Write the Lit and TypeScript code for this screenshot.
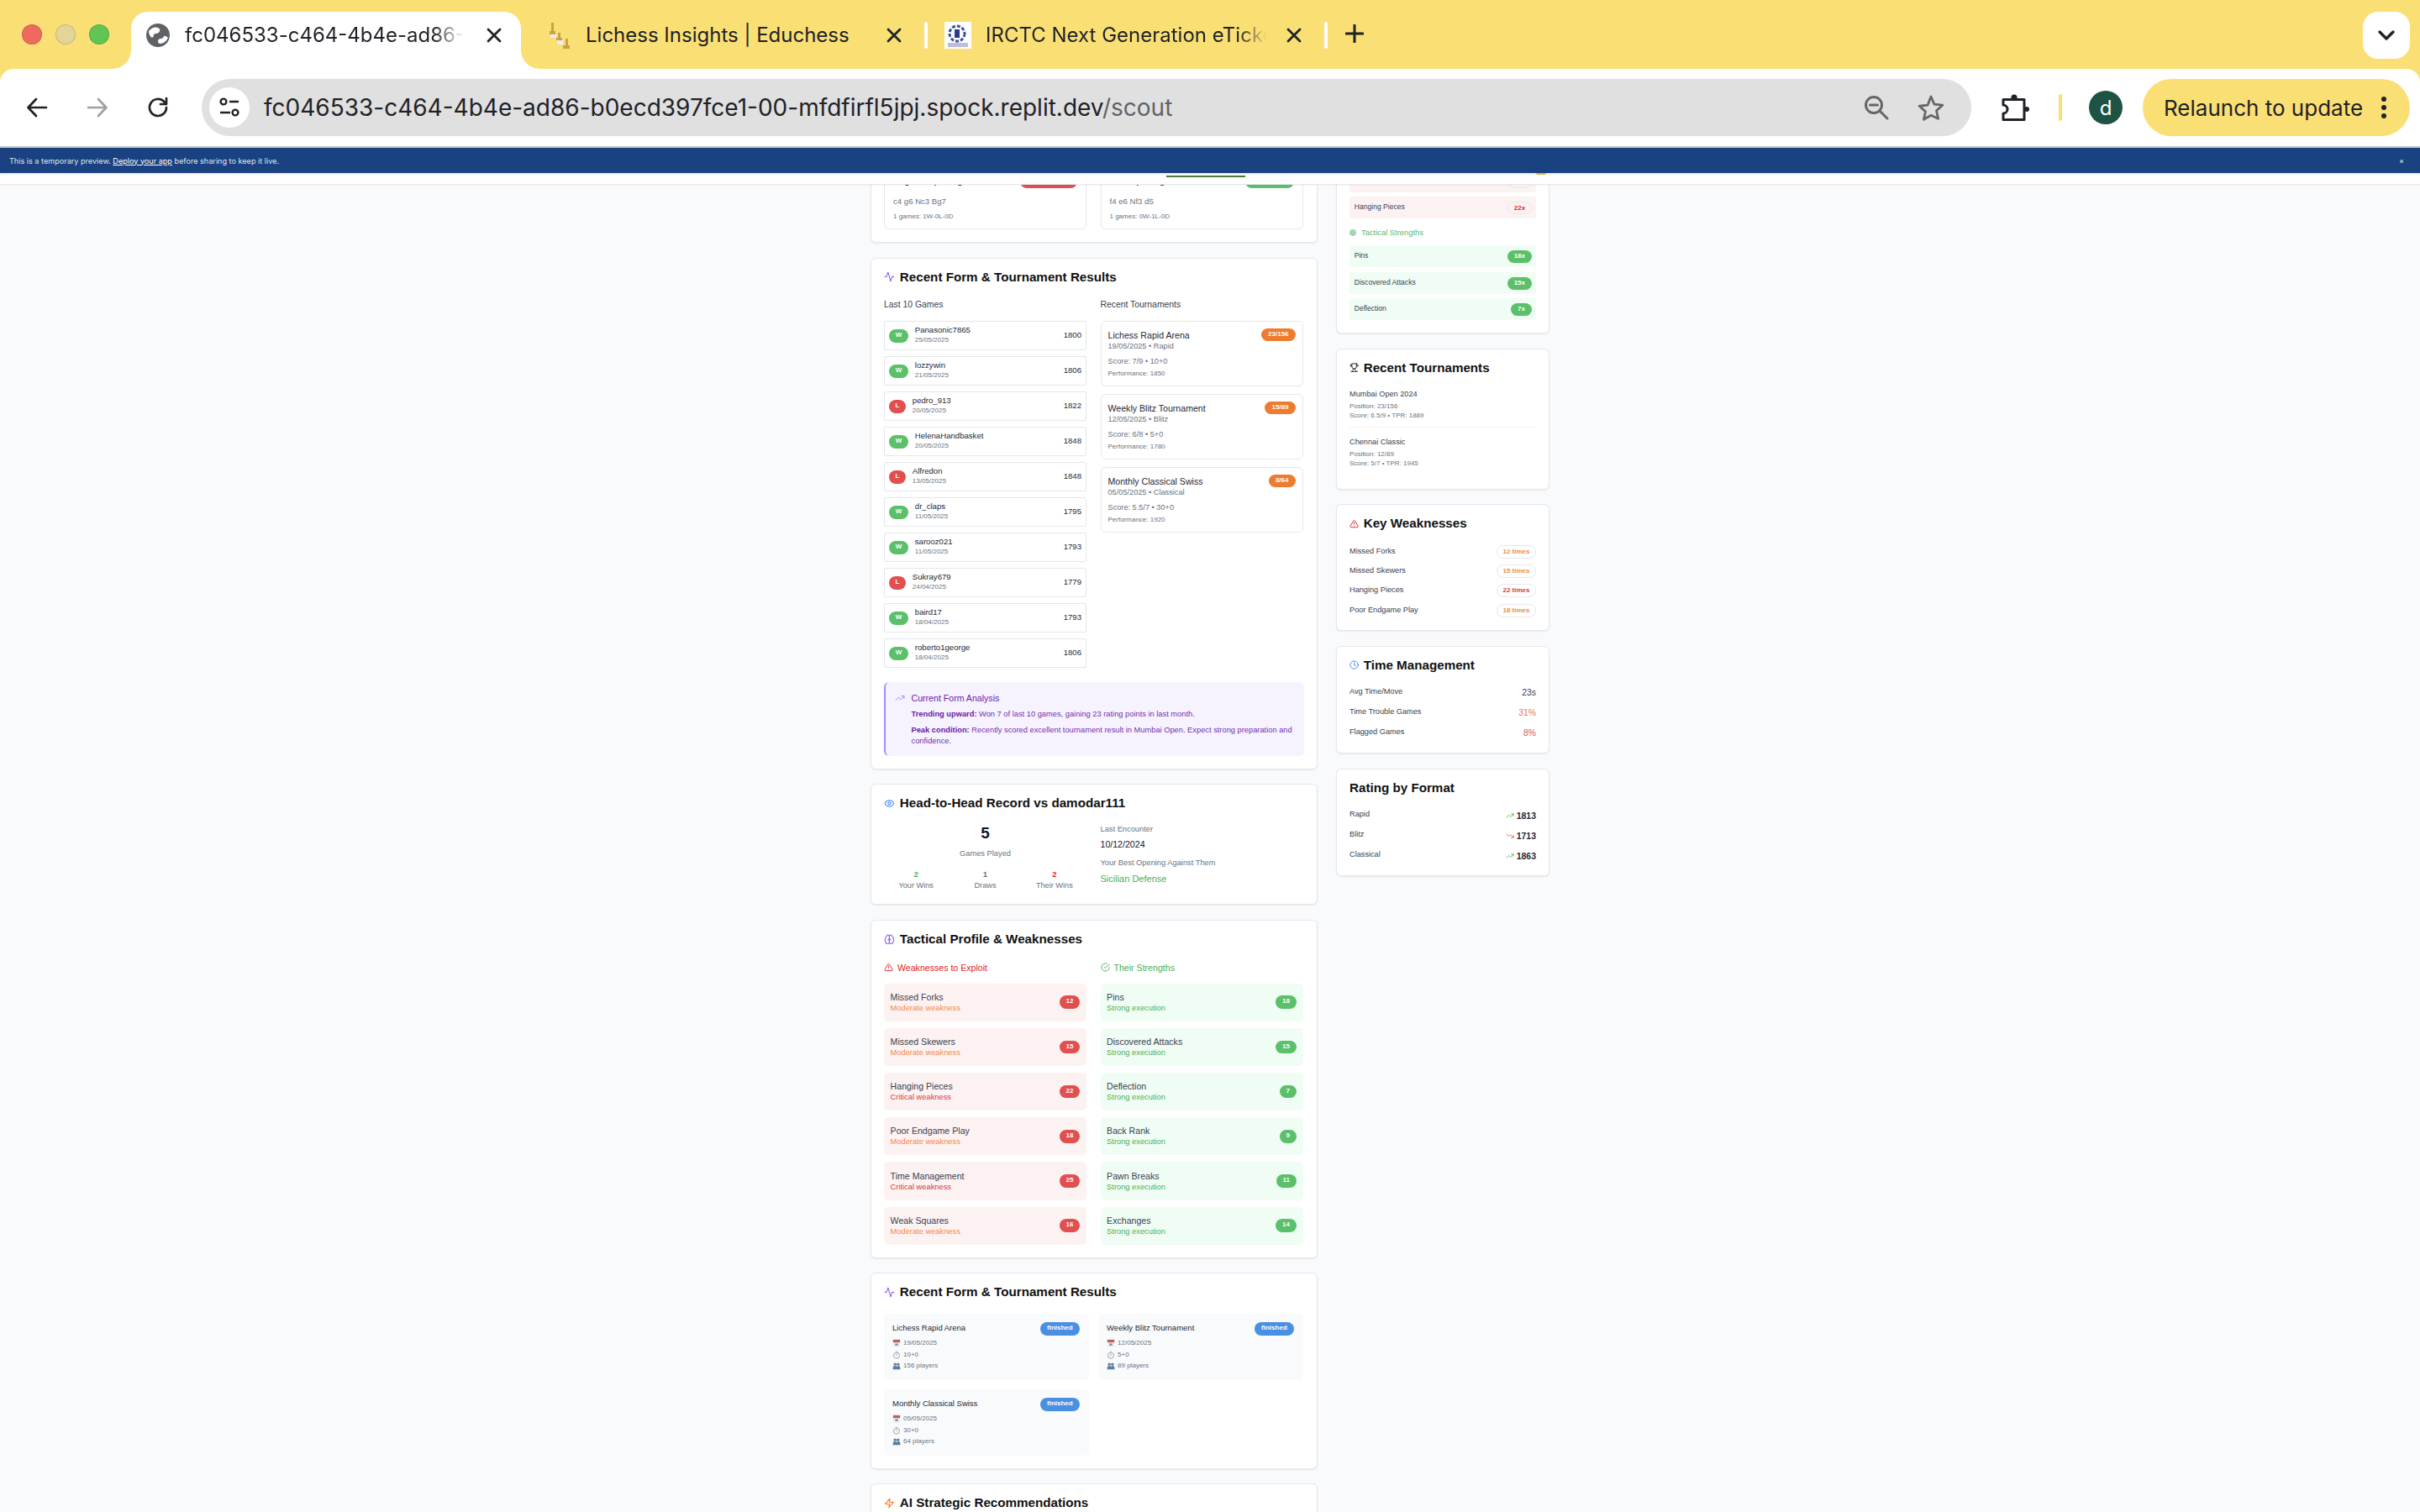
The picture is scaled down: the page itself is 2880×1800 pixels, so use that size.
import {css, html, LitElement, svg} from 'lit';
import {customElement} from 'lit/decorators.js';

const icon = (name: string, cls = '') => {
  const parts: Record<string, unknown> = {
    activity: svg`<path d="M22 12h-2.48a2 2 0 0 0-1.93 1.46l-2.35 8.36a.25.25 0 0 1-.48 0L9.24 2.18a.25.25 0 0 0-.48 0l-2.35 8.36A2 2 0 0 1 4.49 12H2"/>`,
    up: svg`<polyline points="22 7 13.5 15.5 8.5 10.5 2 17"/><polyline points="16 7 22 7 22 13"/>`,
    down: svg`<polyline points="22 17 13.5 8.5 8.5 13.5 2 7"/><polyline points="16 17 22 17 22 11"/>`,
    eye: svg`<path d="M2 12s3-7 10-7 10 7 10 7-3 7-10 7-10-7-10-7Z"/><circle cx="12" cy="12" r="3"/>`,
    brain: svg`<path d="M12 5a3 3 0 1 0-5.997.125 4 4 0 0 0-2.526 5.77 4 4 0 0 0 .556 6.588A4 4 0 1 0 12 18Z"/><path d="M12 5a3 3 0 1 1 5.997.125 4 4 0 0 1 2.526 5.77 4 4 0 0 1-.556 6.588A4 4 0 1 1 12 18Z"/><path d="M15 13a4.5 4.5 0 0 1-3-4 4.5 4.5 0 0 1-3 4"/>`,
    alert: svg`<path d="m21.73 18-8-14a2 2 0 0 0-3.48 0l-8 14A2 2 0 0 0 4 21h16a2 2 0 0 0 1.73-3"/><path d="M12 9v4"/><path d="M12 17h.01"/>`,
    check: svg`<path d="M22 11.08V12a10 10 0 1 1-5.93-9.14"/><polyline points="22 4 12 14.01 9 11.01"/>`,
    trophy: svg`<path d="M6 9H4.5a2.5 2.5 0 0 1 0-5H6"/><path d="M18 9h1.5a2.5 2.5 0 0 0 0-5H18"/><path d="M4 22h16"/><path d="M10 14.66V17c0 .55-.47.98-.97 1.21C7.85 18.75 7 20.24 7 22"/><path d="M14 14.66V17c0 .55.47.98.97 1.21C16.15 18.75 17 20.24 17 22"/><path d="M18 2H6v7a6 6 0 0 0 12 0V2Z"/>`,
    clock: svg`<circle cx="12" cy="12" r="10"/><polyline points="12 6 12 12 16 14"/>`,
    zap: svg`<polygon points="13 2 3 14 12 14 11 22 21 10 12 10 13 2"/>`,
  };
  return html`<svg class="ic ${cls}" viewBox="0 0 24 24" fill="none" stroke="currentColor" stroke-width="2" stroke-linecap="round" stroke-linejoin="round">${parts[name]}</svg>`;
};

const emoji = {
  cal: html`<svg class="em" viewBox="0 0 12 12"><rect x="1" y="1" width="10" height="10.5" fill="#eceef0"/><rect x="1" y="1" width="10" height="4" fill="#b5645f"/><rect x="4" y="6.5" width="4" height="3" fill="#8b8f96"/></svg>`,
  clock: html`<svg class="em" viewBox="0 0 12 12"><circle cx="6" cy="6.8" r="4.3" fill="#f3f4f5" stroke="#9a9ea3"/><rect x="5" y=".8" width="2" height="1.2" fill="#9a9ea3"/><path d="M6 4.5v2.4" stroke="#777" stroke-width=".7"/></svg>`,
  people: html`<svg class="em" viewBox="0 0 12 12"><g fill="#5d7d9c"><circle cx="3.8" cy="3.8" r="2"/><circle cx="8.2" cy="3.8" r="2"/><path d="M.8 11V8q0-2 3-2t3 2v3zM6.6 11V7.4q0-1.4 1.6-1.4q3 0 3 2v3z"/></g></svg>`,
};

const games = [
  ['W', 'Panasonic7865', '25/05/2025', '1800'],
  ['W', 'lozzywin', '21/05/2025', '1806'],
  ['L', 'pedro_913', '20/05/2025', '1822'],
  ['W', 'HelenaHandbasket', '20/05/2025', '1848'],
  ['L', 'Alfredon', '13/05/2025', '1848'],
  ['W', 'dr_claps', '11/05/2025', '1795'],
  ['W', 'sarooz021', '11/05/2025', '1793'],
  ['L', 'Sukray679', '24/04/2025', '1779'],
  ['W', 'baird17', '18/04/2025', '1793'],
  ['W', 'roberto1george', '18/04/2025', '1806'],
];
const results = [
  ['Lichess Rapid Arena', '23/156', '19/05/2025 • Rapid', 'Score: 7/9 • 10+0', 'Performance: 1850'],
  ['Weekly Blitz Tournament', '15/89', '12/05/2025 • Blitz', 'Score: 6/8 • 5+0', 'Performance: 1780'],
  ['Monthly Classical Swiss', '8/64', '05/05/2025 • Classical', 'Score: 5.5/7 • 30+0', 'Performance: 1920'],
];
const weak = [
  ['Missed Forks', 'Moderate weakness', '12', 'mod'],
  ['Missed Skewers', 'Moderate weakness', '15', 'mod'],
  ['Hanging Pieces', 'Critical weakness', '22', 'crit'],
  ['Poor Endgame Play', 'Moderate weakness', '18', 'mod'],
  ['Time Management', 'Critical weakness', '25', 'crit'],
  ['Weak Squares', 'Moderate weakness', '16', 'mod'],
];
const strong = [
  ['Pins', '18'], ['Discovered Attacks', '15'], ['Deflection', '7'],
  ['Back Rank', '9'], ['Pawn Breaks', '11'], ['Exchanges', '14'],
];
const events = [
  ['Lichess Rapid Arena', '19/05/2025', '10+0', '156 players'],
  ['Weekly Blitz Tournament', '12/05/2025', '5+0', '89 players'],
  ['Monthly Classical Swiss', '05/05/2025', '30+0', '64 players'],
];
const keyWeak = [
  ['Missed Forks', '12 times', 'mod'], ['Missed Skewers', '15 times', 'mod'],
  ['Hanging Pieces', '22 times', 'crit'], ['Poor Endgame Play', '18 times', 'mod'],
];

@customElement('app-root')
export class AppRoot extends LitElement {
  static styles = css`
    :host {
      display: flex;
      flex-direction: column;
      width: 2880px;
      height: 1800px;
      overflow: hidden;
      background: #f8fafc;
      font-family: 'Liberation Sans', Arial, sans-serif;
      color: #1f2937;
    }
    /* browser chrome */
    .tabs {
      height: 82px;
      flex: none;
      display: flex;
      background: #fadf75;
      font-family: Inter, sans-serif;
      font-size: 24px;
      color: #1f2227;
    }
    .lights { display: flex; gap: 16px; padding: 29px 0 0 26px; width: 130px; box-sizing: border-box; }
    .lights i { width: 24px; height: 24px; border-radius: 50%; box-sizing: border-box; border: 1px solid rgba(0,0,0,.14); }
    .tab {
      position: relative;
      margin-top: 14px;
      width: 464px;
      margin-left: 26px;
      height: 68px;
      background: #fff;
      border-radius: 20px 20px 0 0;
      display: flex;
      align-items: flex-start;
      padding: 14px 0 0 18px;
      box-sizing: border-box;
    }
    .tab::before, .tab::after {
      content: '';
      position: absolute;
      bottom: 0;
      width: 22px;
      height: 22px;
    }
    .tab::before { left: -22px; background: radial-gradient(circle at 0 0, #fadf75 21.5px, #fff 22px); }
    .tab::after { right: -22px; background: radial-gradient(circle at 100% 0, #fadf75 21.5px, #fff 22px); }
    .tab .globe { width: 28px; height: 28px; flex: none; }
    .tab .t { margin-left: 18px; width: 332px; flex: none; white-space: nowrap; line-height: 28px;
      -webkit-mask-image: linear-gradient(to right, #000 295px, transparent 332px); }
    .x { width: 18px; height: 18px; flex: none; }
    .tab .x { margin: 5px 0 0 27px; }
    .bgtab { display: flex; align-items: flex-start; padding-top: 26px; flex: none; }
    .bgtab .fav { width: 32px; height: 32px; flex: none; }
    .bgtab .t { white-space: nowrap; line-height: 30px; margin-top: 1px; }
    .bgtab .x { margin-top: 7px; }
    .sep { width: 4px; height: 32px; margin-top: 26px; background: #fff; border-radius: 2px; flex: none; }
    .plus { width: 22px; height: 22px; margin: 29px 0 0 21px; flex: none; }
    .chev {
      margin: 14px 12px 0 auto;
      width: 56px;
      height: 56px;
      background: #fff;
      border-radius: 18px;
      display: flex;
      align-items: center;
      justify-content: center;
    }
    .chev svg { width: 22px; height: 14px; }
    .toolbar {
      height: 92px;
      flex: none;
      box-sizing: border-box;
      display: flex;
      align-items: center;
      background: #fff;
      border-radius: 16px 16px 0 0;
      font-family: Inter, sans-serif;
      color: #1f2227;
    }
    .toolwrap { background: #fadf75; flex: none; }
    .nav { width: 26px; height: 26px; flex: none; }
    .omni {
      margin-left: 39px;
      width: 2106px;
      height: 68px;
      border-radius: 34px;
      background: #e0e0e0;
      display: flex;
      align-items: center;
      box-sizing: border-box;
      padding: 0 0 0 9px;
      flex: none;
    }
    .tune { width: 48px; height: 48px; border-radius: 50%; background: #fff; display: flex; align-items: center; justify-content: center; flex: none; }
    .tune svg { width: 26px; height: 26px; }
    .url { margin-left: 17px; font-size: 28px; width: 1904px; white-space: nowrap; flex: none; }
    .url span { color: #5f6368; }
    .omni .zoom { width: 30px; height: 30px; flex: none; }
    .omni .star { width: 32px; height: 32px; margin-left: 34px; flex: none; }
    .puzzle { width: 34px; height: 34px; margin-left: 35px; flex: none; }
    .vsep { width: 4px; height: 32px; background: #fadf75; border-radius: 2px; margin-left: 35px; flex: none; }
    .avatar { width: 40px; height: 40px; margin-left: 32px; border-radius: 50%; background: #1e5245; color: #fff; font-size: 24px; display: flex; align-items: center; justify-content: center; flex: none; }
    .relaunch { margin-left: 24px; width: 318px; height: 68px; border-radius: 34px; background: #fadf75; font-size: 26px; display: flex; align-items: center; padding-left: 25px; box-sizing: border-box; white-space: nowrap; flex: none; }
    .relaunch svg { width: 6px; height: 28px; margin-left: 22px; flex: none; }
    .line { height: 2px; background: #c7c7c7; flex: none; }
    .preview {
      height: 30px;
      flex: none;
      background: #1a4180;
      color: #dfe6f2;
      font-family: Inter, sans-serif;
      font-size: 9.1px;
      display: flex;
      align-items: center;
      justify-content: space-between;
      padding: 0 19px 0 11px;
    }
    .preview u { color: #fff; }
    /* page */
    .page { flex: 1; position: relative; overflow: hidden; min-height: 0; }
    .topnav {
      position: absolute;
      z-index: 2;
      left: 0;
      right: 0;
      top: 0;
      height: 13px;
      background: #fff;
      border-bottom: 1px solid #e5e7eb;
      box-shadow: inset 0 3px 3px -2px rgba(0,0,0,.12), 0 1px 2px rgba(0,0,0,.04);
    }
    .topnav .act { position: absolute; left: 1388px; width: 94px; top: 3px; height: 2px; background: #4b7a3c; }
    .topnav .dot { position: absolute; left: 1828px; width: 12px; height: 2px; top: 0; border-radius: 0 0 6px 6px; background: #d9b93b; }
    .grid {
      display: grid;
      grid-template-columns: 532px 254px;
      column-gap: 22px;
      justify-content: center;
      align-items: start;
      margin-top: -19px;
    }
    .col { display: flex; flex-direction: column; gap: 17.5px; }
    .card {
      background: #fff;
      border: 1px solid #e5e7eb;
      border-radius: 6px;
      box-shadow: 0 1px 2px rgba(0,0,0,.07);
      padding: 15px;
    }
    h2 {
      margin: -2px 0 0;
      font-size: 15.2px;
      line-height: 18px;
      font-weight: 700;
      color: #111;
      display: flex;
      align-items: center;
      gap: 6px;
      white-space: nowrap;
    }
    .ic { width: 12.8px; height: 12.8px; flex: none; }
    .side h2 { gap: 5.5px; }
    .side h2 .ic { width: 11.2px; height: 11.2px; }
    .purple { color: #8b5cf6; }
    .blue { color: #3b82f6; }
    .amber { color: #f97316; }
    .dark { color: #222; }
    .two { display: grid; grid-template-columns: 241px 241px; column-gap: 16.5px; }
    /* opening cut off by the top nav */
    .openings { margin-bottom: .5px; }
    .op {
      border: 1px solid #e5e7eb;
      border-radius: 6px;
      padding: 6px 10px 0;
      height: 69.5px;
      box-sizing: border-box;
      position: relative;
    }
    .op .n { font-size: 10.4px; font-weight: 700; line-height: 12px; color: #374151; }
    .op .pill { position: absolute; right: 10px; top: 4px; height: 16px; border-radius: 8px; }
    .op .m { font-size: 9.6px; color: #6b7280; line-height: 12px; margin-top: 12px; }
    .op .g { font-size: 8px; color: #6b7280; line-height: 10px; margin-top: 7px; }
    /* form */
    .sub { font-size: 10.4px; line-height: 12px; color: #374151; margin: 18.3px 0 13.3px; }
    .subs { align-items: start; }
    .stack { display: flex; flex-direction: column; }
    .game {
      height: 35.4px;
      box-sizing: border-box;
      border: 1px solid #e5e7eb;
      border-radius: 2px;
      margin-bottom: 6.6px;
      display: flex;
      align-items: center;
      padding: 0 5px;
    }
    .res { height: 16px; border-radius: 8px; color: #fff; font-size: 8px; font-weight: 700; line-height: 14px; text-align: center; flex: none; }
    .res.W { width: 23px; background: #5cbf69; }
    .res.L { width: 20px; background: #e14f4f; }
    .game .who { margin: -2.3px 0 0 7.8px; flex: 1; }
    .game .name { font-size: 9.6px; line-height: 12px; color: #1f2937; }
    .game .date { font-size: 8px; line-height: 10px; color: #6b7280; margin-top: .3px; }
    .game .rate { font-size: 9.6px; color: #1f2937; margin-top: -2.6px; }
    .trn {
      position: relative;
      border: 1px solid #e5e7eb;
      border-radius: 6px;
      padding: 9.5px 8px 0;
      height: 78.4px;
      box-sizing: border-box;
      margin-bottom: 8.6px;
    }
    .trn .name { font-size: 10.6px; line-height: 13px; color: #1f2937; }
    .trn .meta { font-size: 9.2px; line-height: 11px; color: #6b7280; margin-top: 1.4px; }
    .trn .score { font-size: 9.2px; line-height: 11px; color: #6b7280; margin-top: 7px; }
    .trn .perf { font-size: 8px; line-height: 10px; color: #6b7280; margin-top: 4px; }
    .trn .rank {
      position: absolute;
      right: 8px;
      top: 7.7px;
      height: 15px;
      padding: 0 8px;
      border-radius: 8px;
      background: #ee7b30;
      color: #fff;
      font-size: 8px;
      font-weight: 700;
      line-height: 13px;
    }
    .form {
      height: 88px;
      box-sizing: border-box;
      margin-top: 9.7px;
      background: #f6f3fe;
      border-left: 2px solid #a78bfa;
      border-radius: 6px;
      padding: 13px 8px 0 10.5px;
      color: #7431b0;
      font-size: 9.3px;
    }
    .form b { color: #6b21a8; }
    .form .hd { display: flex; align-items: center; gap: 8px; font-size: 10.6px; line-height: 12px; color: #6b21a8; }
    .form .hd .ic { color: #a78bfa; width: 12px; height: 12px; }
    .form p { margin: 7.5px 0 0 20px; line-height: 13px; }
    .form p + p { margin-top: 6px; }
    /* h2h */
    .h2h { margin-top: 16.3px; padding-bottom: 1px; }
    .h2h .left { text-align: center; padding-top: 1px; }
    .big { font-size: 19px; font-weight: 700; line-height: 20px; color: #111827; }
    .gp { font-size: 9.3px; line-height: 12px; color: #6b7280; margin-top: 8px; }
    .wins { display: grid; grid-template-columns: repeat(3, 1fr); margin: 12.5px -3px 0; }
    .wins b { display: block; font-size: 9.6px; line-height: 11px; }
    .wins span { display: block; font-size: 9.2px; line-height: 12px; color: #6b7280; margin-top: 2.5px; }
    .green { color: #4caf50; }
    .red { color: #dc2626; }
    .gray { color: #6b7280; }
    .h2h .lab { font-size: 9.3px; line-height: 12px; color: #6b7280; }
    .h2h .val { font-size: 10.6px; line-height: 13px; color: #111827; margin: 5.8px 0 9.2px; }
    .h2h .op2 { font-size: 11px; line-height: 14px; color: #4caf50; margin-top: 5.3px; }
    /* tactical */
    .tact-head { display: flex; align-items: center; gap: 5px; font-size: 10.6px; line-height: 12px; margin: 18.7px 0 13px; }
    .tact-head .ic { width: 11px; height: 11px; }
    .trow {
      height: 45.3px;
      box-sizing: border-box;
      border-radius: 5px;
      margin-bottom: 7.9px;
      padding: 0 8px 0 7.6px;
      display: flex;
      align-items: center;
      justify-content: space-between;
    }
    .trow.bad { background: #fdf2f2; }
    .trow.good { background: #f0fdf4; }
    .trow .name { font-size: 10.6px; line-height: 13px; color: #374151; }
    .trow .desc { font-size: 9.3px; line-height: 11px; margin-top: 1px; }
    .mod { color: #f08a4b; }
    .crit { color: #d9393e; }
    .num {
      height: 15.6px;
      padding: 0 7.6px;
      border-radius: 8px;
      color: #fff;
      font-size: 8px;
      font-weight: 700;
      line-height: 13px;
      text-align: center;
    }
    .bad .num { background: #e14f4f; }
    .good .num { background: #5cbf69; }
    .last { margin-bottom: 0; }
    /* events */
    .events { display: grid; grid-template-columns: 243.7px 243.7px; column-gap: 11.4px; row-gap: 11.3px; margin-top: 16.6px; padding-bottom: .2px; }
    .ev { position: relative; height: 78.7px; box-sizing: border-box; background: #f8fafc; border-radius: 6px; padding: 10.2px 10px 0; }
    .ev .name { font-size: 9.5px; line-height: 13px; color: #1f2937; }
    .ev .pill { position: absolute; right: 11px; top: 10px; height: 16px; padding: 0 8px; border-radius: 8px; background: #4a90e2; color: #fff; font-size: 8px; font-weight: 700; line-height: 14px; }
    .ev .li { display: flex; align-items: center; gap: 3px; font-size: 8px; line-height: 10px; color: #6b7280; margin-top: 3.6px; }
    .ev .name + .li { margin-top: 6.8px; }
    .em { width: 10px; height: 10px; flex: none; }
    .ai { height: 120px; box-sizing: border-box; }
    /* sidebar */
    .srow { height: 26px; box-sizing: border-box; border-radius: 3px; margin-bottom: 5px; display: flex; align-items: center; justify-content: space-between; padding: 0 5px 0 5.7px; font-size: 8.6px; color: #374151; }
    .srow.last { margin-bottom: 0; }
    .srow.bad { background: #fdf2f2; }
    .srow.good { background: #f0fdf4; }
    .srow span:first-child { margin-top: -2px; }
    .srow .tag { height: 15px; padding: 0 8px; border-radius: 8px; font-size: 8px; font-weight: 700; line-height: 13px; text-align: center; }
    .srow.bad .tag { border: 1px solid #e5e7eb; box-sizing: border-box; color: #dc2626; background: #fdf2f2; width: 29px; padding: 0; }
    .srow.good .tag { background: #5cbf69; color: #fff; }
    .shead { display: flex; align-items: center; gap: 6px; font-size: 9.4px; line-height: 12px; color: #5cb870; margin: 11px 0 9px; }
    .shead i { width: 8px; height: 8px; border-radius: 50%; background: #a5d6ae; flex: none; }
    .st .name { font-size: 9.2px; line-height: 12px; color: #374151; margin-top: 16px; }
    .st hr + .name { margin-top: 11.4px; }
    .st .l { font-size: 8px; line-height: 11px; color: #6b7280; }
    .st .name + .l { margin-top: 3px; }
    .st hr { border: 0; border-top: 1px solid #f1f2f4; margin: 8.5px 0 0; }
    .st .l:last-child { margin-bottom: 24.5px; }
    .st { padding-bottom: 0; }
    .kw { display: flex; flex-direction: column; gap: 7.3px; margin-top: 16.4px; padding-bottom: .6px; }
    .kw div { display: flex; align-items: center; justify-content: space-between; font-size: 9.2px; color: #374151; }
    .kw span { margin-top: -2px; }
    .kw b { width: 47px; height: 16px; box-sizing: border-box; border: 1px solid #e5e7eb; border-radius: 8px; background: #fff; font-size: 8px; line-height: 13px; text-align: center; font-weight: 700; }
    .list { display: flex; flex-direction: column; gap: 12px; margin-top: 16px; padding-bottom: 4.3px; }
    .list div { height: 12px; display: flex; justify-content: space-between; align-items: flex-start; font-size: 9.2px; line-height: 12px; color: #374151; }
    .list em { font-style: normal; font-size: 10.4px; line-height: 12px; margin-top: 2.3px; display: flex; align-items: center; gap: 3px; }
    .list em.strong { font-weight: 700; color: #1f2937; font-size: 10.5px; }
    .list em span { display: flex; }
    .list .ic { width: 10px; height: 10px; }
    .orange { color: #e8764e; }
    .redish { color: #e0565a; }
  `;

  render() {
    return html`
      <div class="tabs">
        <div class="lights">
          <i style="background:#ee6a5f"></i><i style="background:#e3d597"></i><i style="background:#61c554"></i>
        </div>
        <div class="tab">
          <svg class="globe" viewBox="0 0 28 28"><circle cx="14" cy="14" r="14" fill="#5f6368"/><path d="M3 9q5-6 11-4q3 1 2 4t-5 3q-3 1-2 3l-2 2q-4-3-4-8zM26 17q-3 6-9 7q-3 0-3-3t4-3q3-1 3-3q2-1 5 2z" fill="#fff"/></svg>
          <div class="t">fc046533-c464-4b4e-ad86-</div>
          ${this.x()}
        </div>
        <div class="bgtab" style="margin-left:33px;width:447px">
          <svg class="fav" style="width:28px" viewBox="0 0 28 32"><path d="M2 14h7v5H2zM10 21h7v6h-7z" fill="#eee"/><g fill="#c9a24b"><rect x="3" y="1" width="3" height="11"/><rect x="1" y="11" width="7" height="4"/><rect x="11" y="13" width="3" height="7"/><rect x="9" y="19" width="7" height="3"/><rect x="20" y="20" width="3" height="8"/><rect x="17" y="28" width="8" height="4"/></g></svg>
          <div class="t" style="margin-left:16px;width:358px">Lichess Insights | Educhess</div>
          ${this.x()}
        </div>
        <div class="sep"></div>
        <div class="bgtab" style="margin-left:20px;width:425px">
          <svg class="fav" viewBox="0 0 32 32"><rect width="32" height="32" fill="#fff"/><circle cx="15" cy="14" r="9" fill="none" stroke="#3d4f9e" stroke-width="3" stroke-dasharray="4 2"/><rect x="12" y="9" width="6" height="10" fill="#2d3a8c"/><rect x="4" y="25" width="24" height="5" fill="#b9bfdc"/></svg>
          <div class="t" style="margin-left:17px;width:334px;-webkit-mask-image:linear-gradient(to right,#000 300px,transparent 334px)">IRCTC Next Generation eTicke</div>
          ${this.x('margin-left:24px')}
        </div>
        <div class="sep" style="margin-left:27px"></div>
        <svg class="plus" viewBox="0 0 22 22"><path d="M11 1v20M1 11h20" stroke="#1f2227" stroke-width="3" stroke-linecap="round"/></svg>
        <div class="chev"><svg viewBox="0 0 22 14"><path d="M3 3l8 8 8-8" fill="none" stroke="#1f2227" stroke-width="3.4" stroke-linecap="round" stroke-linejoin="round"/></svg></div>
      </div>
      <div class="toolwrap">
        <div class="toolbar">
          <svg class="nav" style="margin-left:31px" viewBox="0 0 26 26"><path d="M24 13H3M12 3L2.5 13 12 23" fill="none" stroke="#1f2227" stroke-width="2.7" stroke-linecap="round" stroke-linejoin="round"/></svg>
          <svg class="nav" style="margin-left:46px" viewBox="0 0 26 26"><path d="M2 13h21M14 3l9.5 10L14 23" fill="none" stroke="#a1a1a1" stroke-width="2.7" stroke-linecap="round" stroke-linejoin="round"/></svg>
          <svg class="nav" style="margin-left:46px" viewBox="0 0 26 26"><path d="M23 13a10 10 0 1 1-3-7.2L23 9M23 2v7h-7" fill="none" stroke="#1f2227" stroke-width="2.7" stroke-linecap="round" stroke-linejoin="round"/></svg>
          <div class="omni">
            <div class="tune"><svg viewBox="0 0 26 26" fill="none" stroke="#1f2227" stroke-width="2.4"><circle cx="6" cy="6" r="3.4"/><path d="M13 6h11M2 19h12"/><circle cx="20" cy="19" r="3.4"/></svg></div>
            <div class="url">fc046533-c464-4b4e-ad86-b0ecd397fce1-00-mfdfirfl5jpj.spock.replit.dev<span>/scout</span></div>
            <svg class="zoom" viewBox="0 0 30 30" fill="none" stroke="#666" stroke-width="3" stroke-linecap="round"><circle cx="12" cy="12" r="9.5"/><path d="M7.5 12h9M19 19l9 9"/></svg>
            <svg class="star" viewBox="0 0 32 32"><path d="M16 3l4 9.2 9.8 1-7.3 6.5 2.1 9.6L16 25.3l-8.6 5 2.1-9.6-7.3-6.5 9.8-1z" fill="none" stroke="#666" stroke-width="2.8" stroke-linejoin="round"/></svg>
          </div>
          <svg class="puzzle" viewBox="0 0 34 34"><circle cx="16" cy="5" r="3.6" fill="#1f2227"/><circle cx="31" cy="19" r="3" fill="#1f2227"/><path d="M3 7.5H28V31.5H3V24a5 5 0 0 0 0-10z" fill="#fff" stroke="#1f2227" stroke-width="3" stroke-linejoin="round"/></svg>
          <div class="vsep"></div>
          <div class="avatar">d</div>
          <div class="relaunch">Relaunch to update
            <svg viewBox="0 0 6 28"><circle cx="3" cy="4" r="3" fill="#1f2227"/><circle cx="3" cy="14" r="3" fill="#1f2227"/><circle cx="3" cy="24" r="3" fill="#1f2227"/></svg>
          </div>
        </div>
      </div>
      <div class="line"></div>
      <div class="preview">
        <span>This is a temporary preview. <u>Deploy your app</u> before sharing to keep it live.</span>
        <span>×</span>
      </div>
      <div class="page">
        <div class="topnav"><div class="act"></div><div class="dot"></div></div>
        <div class="grid">
          <div class="col main">${this.mainCol()}</div>
          <div class="col side">${this.sideCol()}</div>
        </div>
      </div>
    `;
  }

  x(style = '') {
    return html`<svg class="x" style=${style} viewBox="0 0 18 18"><path d="M2 2l14 14M16 2L2 16" stroke="#1f2227" stroke-width="2.8" stroke-linecap="round"/></svg>`;
  }

  mainCol() {
    return html`
      <section class="card">
        <div class="two openings">
          <div class="op"><div class="n">English Opening</div><div class="pill" style="background:#e14f4f;width:68px"></div><div class="m">c4 g6 Nc3 Bg7</div><div class="g">1 games: 1W-0L-0D</div></div>
          <div class="op"><div class="n">Bird Opening</div><div class="pill" style="background:#5cbf69;width:58px"></div><div class="m">f4 e6 Nf3 d5</div><div class="g">1 games: 0W-1L-0D</div></div>
        </div>
      </section>
      <section class="card">
        <h2>${icon('activity', 'purple')}Recent Form &amp; Tournament Results</h2>
        <div class="two subs">
          <div class="stack">
            <div class="sub">Last 10 Games</div>
            ${games.map(g => html`<div class="game">
              <div class="res ${g[0]}">${g[0]}</div>
              <div class="who"><div class="name">${g[1]}</div><div class="date">${g[2]}</div></div>
              <div class="rate">${g[3]}</div>
            </div>`)}
          </div>
          <div class="stack">
            <div class="sub">Recent Tournaments</div>
            ${results.map(r => html`<div class="trn">
              <div class="rank">${r[1]}</div>
              <div class="name">${r[0]}</div>
              <div class="meta">${r[2]}</div>
              <div class="score">${r[3]}</div>
              <div class="perf">${r[4]}</div>
            </div>`)}
          </div>
        </div>
        <div class="form">
          <div class="hd">${icon('up')}Current Form Analysis</div>
          <p><b>Trending upward:</b> Won 7 of last 10 games, gaining 23 rating points in last month.</p>
          <p><b>Peak condition:</b> Recently scored excellent tournament result in Mumbai Open. Expect strong preparation and confidence.</p>
        </div>
      </section>
      <section class="card">
        <h2>${icon('eye', 'blue')}Head-to-Head Record vs damodar111</h2>
        <div class="two h2h">
          <div class="left">
            <div class="big">5</div>
            <div class="gp">Games Played</div>
            <div class="wins">
              <div><b class="green">2</b><span>Your Wins</span></div>
              <div><b class="gray">1</b><span>Draws</span></div>
              <div><b class="red">2</b><span>Their Wins</span></div>
            </div>
          </div>
          <div>
            <div class="lab">Last Encounter</div>
            <div class="val">10/12/2024</div>
            <div class="lab">Your Best Opening Against Them</div>
            <div class="op2">Sicilian Defense</div>
          </div>
        </div>
      </section>
      <section class="card">
        <h2>${icon('brain', 'purple')}Tactical Profile &amp; Weaknesses</h2>
        <div class="two">
          <div>
            <div class="tact-head red">${icon('alert')}Weaknesses to Exploit</div>
            ${weak.map((w, i) => html`<div class="trow bad ${i === 5 ? 'last' : ''}">
              <div><div class="name">${w[0]}</div><div class="desc ${w[3]}">${w[1]}</div></div>
              <div class="num">${w[2]}</div>
            </div>`)}
          </div>
          <div>
            <div class="tact-head green">${icon('check')}Their Strengths</div>
            ${strong.map((s, i) => html`<div class="trow good ${i === 5 ? 'last' : ''}">
              <div><div class="name">${s[0]}</div><div class="desc green">Strong execution</div></div>
              <div class="num">${s[1]}</div>
            </div>`)}
          </div>
        </div>
      </section>
      <section class="card">
        <h2>${icon('activity', 'purple')}Recent Form &amp; Tournament Results</h2>
        <div class="events">
          ${events.map(e => html`<div class="ev">
            <div class="pill">finished</div>
            <div class="name">${e[0]}</div>
            <div class="li">${emoji.cal}${e[1]}</div>
            <div class="li">${emoji.clock}${e[2]}</div>
            <div class="li">${emoji.people}${e[3]}</div>
          </div>`)}
        </div>
      </section>
      <section class="card ai">
        <h2>${icon('zap', 'amber')}AI Strategic Recommendations</h2>
      </section>
    `;
  }

  sideCol() {
    return html`
      <section class="card">
        <div class="srow bad"><span>Missed Skewers</span><span class="tag">15x</span></div>
        <div class="srow bad"><span>Hanging Pieces</span><span class="tag">22x</span></div>
        <div class="shead"><i></i>Tactical Strengths</div>
        <div class="srow good" style="margin-bottom:6px"><span>Pins</span><span class="tag">18x</span></div>
        <div class="srow good"><span>Discovered Attacks</span><span class="tag">15x</span></div>
        <div class="srow good last"><span>Deflection</span><span class="tag">7x</span></div>
      </section>
      <section class="card st">
        <h2>${icon('trophy', 'dark')}Recent Tournaments</h2>
        <div class="name">Mumbai Open 2024</div>
        <div class="l">Position: 23/156</div>
        <div class="l">Score: 6.5/9 • TPR: 1889</div>
        <hr />
        <div class="name">Chennai Classic</div>
        <div class="l">Position: 12/89</div>
        <div class="l">Score: 5/7 • TPR: 1945</div>
      </section>
      <section class="card">
        <h2>${icon('alert', 'red')}Key Weaknesses</h2>
        <div class="kw">
          ${keyWeak.map(k => html`<div><span>${k[0]}</span><b class=${k[2]}>${k[1]}</b></div>`)}
        </div>
      </section>
      <section class="card">
        <h2>${icon('clock', 'blue')}Time Management</h2>
        <div class="list">
          <div>Avg Time/Move<em>23s</em></div>
          <div>Time Trouble Games<em class="orange">31%</em></div>
          <div>Flagged Games<em class="redish">8%</em></div>
        </div>
      </section>
      <section class="card">
        <h2>Rating by Format</h2>
        <div class="list">
          <div>Rapid<em class="strong"><span class="green">${icon('up')}</span>1813</em></div>
          <div>Blitz<em class="strong"><span class="redish">${icon('down')}</span>1713</em></div>
          <div>Classical<em class="strong"><span class="green">${icon('up')}</span>1863</em></div>
        </div>
      </section>
    `;
  }
}
